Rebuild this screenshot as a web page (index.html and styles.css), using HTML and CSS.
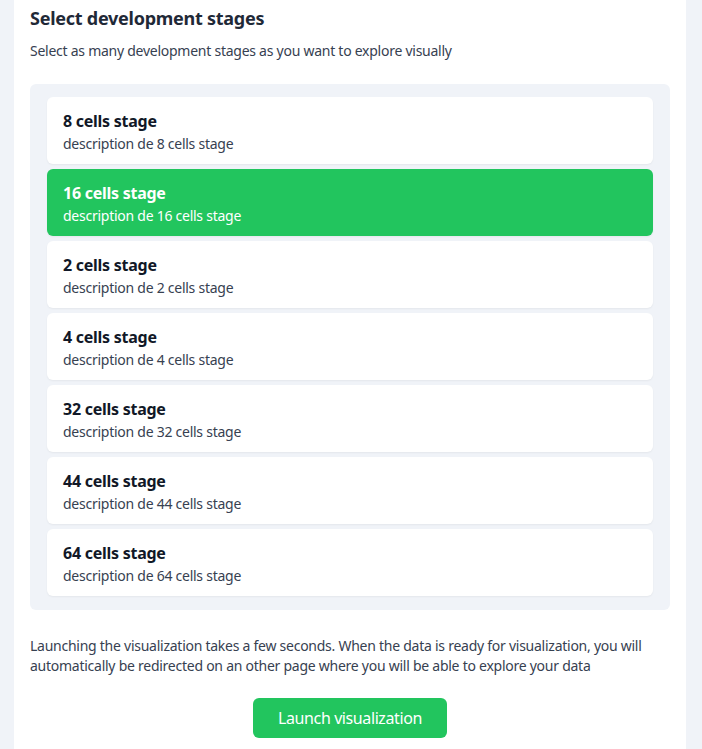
FILE: index.html
```html
<!DOCTYPE html>
<html>
<head>
<meta charset="utf-8">
<link rel="stylesheet" href="styles.css">
</head>
<body>
<div class="panel">
  <h2 class="title">Select development stages</h2>
  <p class="subtitle">Select as many development stages as you want to explore visually</p>
  <div class="stages">
    <div class="stage"><div class="stage-name">8 cells stage</div><div class="stage-desc">description de 8 cells stage</div></div>
    <div class="stage selected"><div class="stage-name">16 cells stage</div><div class="stage-desc">description de 16 cells stage</div></div>
    <div class="stage"><div class="stage-name">2 cells stage</div><div class="stage-desc">description de 2 cells stage</div></div>
    <div class="stage"><div class="stage-name">4 cells stage</div><div class="stage-desc">description de 4 cells stage</div></div>
    <div class="stage"><div class="stage-name">32 cells stage</div><div class="stage-desc">description de 32 cells stage</div></div>
    <div class="stage"><div class="stage-name">44 cells stage</div><div class="stage-desc">description de 44 cells stage</div></div>
    <div class="stage"><div class="stage-name">64 cells stage</div><div class="stage-desc">description de 64 cells stage</div></div>
  </div>
  <p class="note">Launching the visualization takes a few seconds. When the data is ready for visualization, you will automatically be redirected on an other page where you will be able to explore your data</p>
  <div class="actions"><button class="launch">Launch visualization</button></div>
</div>
</body>
</html>
```
FILE: styles.css
```css
html, body {
  margin: 0;
  padding: 0;
  background: #f0f3f8;
  font-family: "Noto Sans", "DejaVu Sans", sans-serif;
  letter-spacing: -0.016em;
}
.panel {
  margin: 0 16px 0 14px;
  background: #ffffff;
  padding: 4px 16px 20px;
  min-height: 749px;
  box-sizing: border-box;
}
.title {
  margin: 0;
  font-size: 18px;
  line-height: 28px;
  font-weight: 700;
  color: #1f2937;
}
.subtitle {
  margin: 9px 0 0;
  font-size: 14px;
  line-height: 20px;
  color: #374151;
}
.stages {
  margin-top: 23px;
  background: #f0f3f8;
  border-radius: 6px;
  padding: 13px 17px 14px;
  display: flex;
  flex-direction: column;
  gap: 5px;
}
.stage {
  background: #ffffff;
  border-radius: 6px;
  padding: 12px 16px 10px;
  box-shadow: 0 1px 2px rgba(0, 0, 0, 0.05);
  color: #111827;
}
.stage.selected {
  background: #22c55e;
  color: #ffffff;
}
.stage-name {
  font-size: 16px;
  line-height: 24px;
  font-weight: 700;
}
.stage-desc {
  margin-top: 1px;
  font-size: 14px;
  line-height: 20px;
  color: #374151;
}
.stage.selected .stage-desc {
  color: #ffffff;
}
.note {
  margin: 26px 0 0;
  font-size: 14px;
  line-height: 20px;
  color: #374151;
}
.actions {
  margin-top: 22px;
  display: flex;
  justify-content: center;
}
.launch {
  width: 194px;
  height: 40px;
  border: none;
  border-radius: 6px;
  background: #22c55e;
  color: #ffffff;
  font-family: inherit;
  font-size: 16px;
  letter-spacing: -0.025em;
}
```
